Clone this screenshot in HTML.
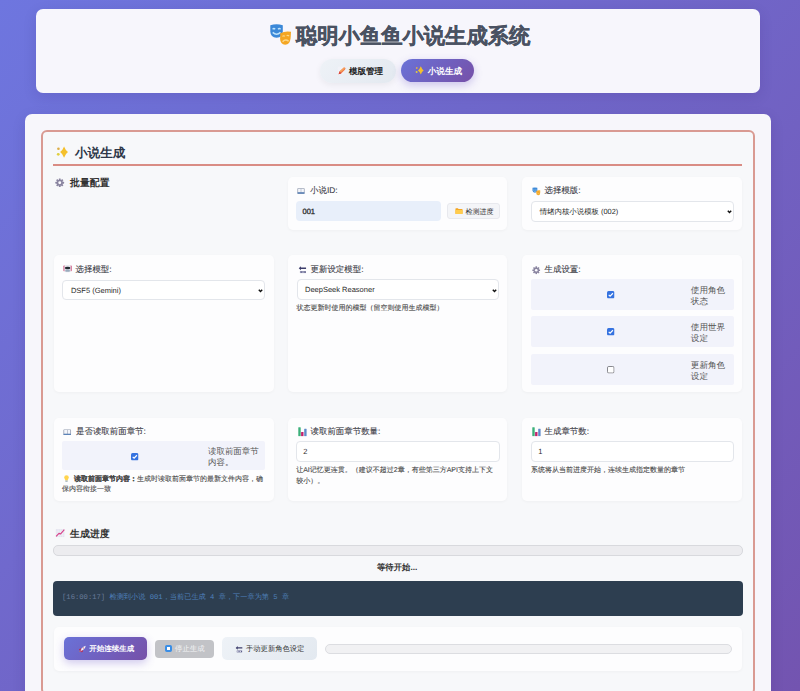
<!DOCTYPE html>
<html><head><meta charset="utf-8">
<style>
*{box-sizing:border-box;margin:0;padding:0}
html,body{width:800px;height:691px;overflow:hidden}
body{font-family:"Liberation Sans",sans-serif;text-rendering:geometricPrecision;background:linear-gradient(135deg,#6e76df 0%,#7354b0 100%);position:relative;color:#333}
.a{position:absolute;white-space:nowrap}
svg.a{overflow:visible}
.header{left:36px;top:9px;width:724px;height:84px;border-radius:7px;background:#f7f6fc;box-shadow:0 4px 14px rgba(40,20,90,.12)}
.title{left:296px;top:21px;font-size:21.3px;font-weight:bold;color:#4a5262;-webkit-text-stroke:0.35px #4a5262;line-height:30px}
.nav{height:24px;border-radius:12px}
.navt{font-size:8.5px;font-weight:bold;line-height:12px}
.main{left:25.2px;top:114px;width:745.4px;height:700px;border-radius:7px;background:#f7f6fb;box-shadow:0 4px 14px rgba(40,20,90,.12)}
.panel{left:41px;top:130px;width:714px;height:565px;border:2px solid #d99a92;border-radius:6px;background:#f7f8fa}
.h2{left:75px;top:143.5px;font-size:12.6px;font-weight:bold;color:#2d3748;line-height:18px}
.h3{font-size:9.9px;font-weight:bold;color:#333;line-height:14px}
.card{background:#fdfdfe;border-radius:5px;box-shadow:0 1px 3px rgba(0,0,0,.035)}
.lbl{font-size:8.45px;margin-top:-0.6px;color:#3d4048;-webkit-text-stroke:0.1px #3d4048;line-height:12px}
.inp{border-radius:4px;color:#2a2a2a;line-height:20px}
.sel{background:#fff;border:1px solid #e3e6eb}
.hint{font-size:7px;color:#484848;-webkit-text-stroke:0.1px #484848;line-height:10.5px;white-space:normal}
.chk{background:#f2f3fb;border-radius:2px}
.ctext{font-size:8.6px;margin-top:0.7px;line-height:11.3px;color:#555;width:38px;white-space:normal}
</style></head><body>

<svg width="0" height="0" style="position:absolute">
 <defs>
  <symbol id="gear" viewBox="0 0 36 36">
   <g fill="#8a85a0">
    <circle cx="18" cy="18" r="11.5"/>
    <rect x="14.5" y="1.5" width="7" height="33" rx="1.5"/>
    <rect x="14.5" y="1.5" width="7" height="33" rx="1.5" transform="rotate(45 18 18)"/>
    <rect x="14.5" y="1.5" width="7" height="33" rx="1.5" transform="rotate(90 18 18)"/>
    <rect x="14.5" y="1.5" width="7" height="33" rx="1.5" transform="rotate(135 18 18)"/>
   </g>
   <circle cx="18" cy="18" r="5.5" fill="#fbfafe"/>
  </symbol>
  <symbol id="masks" viewBox="0 0 22 22">
   <path d="M1.3 2.2 Q7.6 0.2 13.8 2.2 L13.8 8.6 Q13.6 14.6 7.6 14.8 Q1.5 14.6 1.3 8.6 Z" fill="#3b88d8"/>
   <path d="M3.6 6.2 Q4.9 4.9 6.2 6.2 M9 6.2 Q10.3 4.9 11.6 6.2" stroke="#bfe3fb" stroke-width="1.3" fill="none"/>
   <path d="M3.7 9.4 Q7.6 13.2 11.5 9.4" stroke="#bfe3fb" stroke-width="1.5" fill="none"/>
   <path d="M11.3 10.2 Q16.5 7.6 22 8.8 L21.6 15 Q21 21.8 16.2 21.8 Q11.2 21.4 11.1 15.8 Z" fill="#f4a623"/>
   <path d="M13.4 13.4 Q14.6 12.4 15.9 13.2 M17.6 12.8 Q18.9 12 20.1 12.9" stroke="#fcd88a" stroke-width="1.2" fill="none"/>
   <path d="M13.6 18.8 Q16.5 15.6 19.6 18.3" stroke="#fcd88a" stroke-width="1.5" fill="none"/>
  </symbol>
  <symbol id="book" viewBox="0 0 36 36">
   <rect x="2" y="6" width="32" height="24" rx="2" fill="#8a93a8"/>
   <rect x="5" y="8" width="12" height="17" fill="#f4f6fb"/>
   <rect x="19" y="8" width="12" height="17" fill="#f4f6fb"/>
   <rect x="2" y="24" width="32" height="6" rx="2" fill="#5b83b8"/>
  </symbol>
  <symbol id="folder" viewBox="0 0 36 36">
   <path d="M2 8 Q2 6 4 6 L13 6 L16 9 L32 9 Q34 9 34 11 L34 29 Q34 31 32 31 L4 31 Q2 31 2 29 Z" fill="#f4a623"/>
   <path d="M2 14 L34 14 L34 29 Q34 31 32 31 L4 31 Q2 31 2 29 Z" fill="#ffcc4d"/>
  </symbol>
  <symbol id="robot" viewBox="0 0 36 36">
   <rect x="1" y="6" width="8" height="22" rx="3" fill="#d77b9c"/>
   <rect x="27" y="6" width="8" height="22" rx="3" fill="#d77b9c"/>
   <rect x="6" y="4" width="24" height="28" rx="6" fill="#e6e8ee"/>
   <ellipse cx="18" cy="16" rx="11" ry="5" fill="#232a30"/>
   <rect x="9" y="22" width="18" height="8" rx="3" fill="#9aabbd"/>
  </symbol>
  <symbol id="back" viewBox="0 0 36 36">
   <path d="M3 13 L12 5 L12 10 L33 10 L33 16 L12 16 L12 21 Z" fill="#3c3d6b"/>
   <rect x="8" y="25" width="24" height="8" fill="#5a5c88"/>
   <rect x="10" y="26.5" width="3" height="5" fill="#eeeefa"/>
   <rect x="16" y="26.5" width="3" height="5" fill="#eeeefa"/>
   <rect x="22" y="26.5" width="4" height="5" fill="#eeeefa"/>
  </symbol>
  <symbol id="bars" viewBox="0 0 9 9.5">
   <rect x="0.3" y="0.3" width="2.4" height="9" rx="0.4" fill="#3bb07a"/>
   <rect x="3.1" y="5" width="2.4" height="4.3" rx="0.4" fill="#c3206c"/>
   <rect x="6.2" y="1.7" width="2.4" height="7.6" rx="0.4" fill="#5d8ac8"/>
  </symbol>
  <symbol id="chart" viewBox="0 0 36 36">
   <rect x="3" y="4" width="30" height="28" fill="#e4e4ee"/>
   <path d="M3 11 H33 M3 18 H33 M3 25 H33 M11 4 V32 M19 4 V32 M27 4 V32" stroke="#f7f7fc" stroke-width="1.6"/>
   <path d="M4 30 L14 19 L20 21 L33 6" stroke="#d8418a" stroke-width="4" fill="none" stroke-linejoin="round"/>
  </symbol>
  <symbol id="bulb" viewBox="7 2 22 31" preserveAspectRatio="none">
   <circle cx="18" cy="13" r="10" fill="#ffd44d"/>
   <rect x="12" y="18" width="12" height="8" fill="#ffd44d"/>
   <rect x="12.5" y="26" width="11" height="6" rx="2" fill="#99aab5"/>
  </symbol>
  <symbol id="rocket" viewBox="0 0 36 36">
   <path d="M8 22 L4 20 Q9 13 15 15 Z" fill="#c81e3a"/>
   <path d="M14 28 L16 32 Q23 27 21 21 Z" fill="#c81e3a"/>
   <path d="M9 27 Q6 30 5 31 Q6 27 9 24 Z" fill="#f4900c"/>
   <path d="M9 27 L21 21 Q33 11 33 3 Q25 3 15 15 Z" fill="#eef0f6"/>
   <path d="M9 27 L15 15 Q12 19 8 22 Q6 25 9 27 Q11 30 14 28 Q17 24 21 21 Z" fill="#dd2e44"/>
   <circle cx="23" cy="13" r="3" fill="#e37a8c"/>
  </symbol>
  <symbol id="memo" viewBox="0 0 36 36">
   <rect x="3" y="3" width="22" height="28" rx="1" fill="#f1f2f8"/>
   <path d="M6 31 L10 20 L26 6 Q30 5 32 8 Q33 11 30 14 L16 28 Z" fill="#ee7a4a"/>
   <path d="M10 20 L26 6 Q29 6 30 9 L14 24 Z" fill="#f7a35c"/>
   <path d="M6 31 L10 20 L16 28 Z" fill="#d8413a"/>
  </symbol>
  <symbol id="spark" viewBox="0 0 36 36">
   <path d="M23.2 1.4 Q27.6 12.8 34.5 17.5 Q27.6 22.2 23.2 33.7 Q18.8 22.2 11.9 17.5 Q18.8 12.8 23.2 1.4 Z" fill="#f4c02c"/>
   <circle cx="7" cy="8" r="3.8" fill="#dcae48"/>
   <circle cx="6.5" cy="24" r="4" fill="#e0cf3e"/>
  </symbol>
  <symbol id="cbon" viewBox="0 0 8 8">
   <rect x="0" y="0" width="8" height="8" rx="1.6" fill="#3572e0"/>
   <path d="M1.8 4.1 L3.3 5.6 L6.3 2.4" stroke="#fff" stroke-width="1.2" fill="none"/>
  </symbol>
  <symbol id="cboff" viewBox="0 0 8 8">
   <rect x="0.5" y="0.5" width="7" height="7" rx="1.4" fill="#fff" stroke="#6f6f75" stroke-width="0.9"/>
  </symbol>
 </defs>
</svg>

<!-- header -->
<div class="a header"></div>
<svg class="a" style="left:269px;top:23px" width="22" height="22"><use href="#masks"/></svg>
<div class="a title">聪明小鱼鱼小说生成系统</div>
<div class="a nav" style="left:320px;top:59px;width:76px;background:linear-gradient(135deg,#eef2f7,#e3e9f0);box-shadow:0 2px 6px rgba(0,0,0,.06)"></div>
<svg class="a" style="left:336.5px;top:66px" width="9.5" height="9.5"><use href="#memo"/></svg>
<div class="a navt" style="left:349px;top:65px;color:#222">模版管理</div>
<div class="a nav" style="left:400.8px;top:58.9px;height:23.2px;width:73.6px;background:linear-gradient(135deg,#6a72d8,#7650a8);box-shadow:0 3px 8px rgba(102,80,200,.3)"></div>
<svg class="a" style="left:415px;top:66.2px" width="9" height="9"><use href="#spark"/></svg>
<div class="a navt" style="left:427.7px;top:65px;color:#fff;font-size:8.6px">小说生成</div>

<!-- main -->
<div class="a main"></div>
<div class="a panel"></div>
<svg class="a" style="left:55.5px;top:145.5px" width="12.5" height="12.5"><use href="#spark"/></svg>
<div class="a h2">小说生成</div>
<div class="a" style="left:53px;top:164px;width:689px;height:2px;background:#d98c84"></div>

<!-- row1 -->
<svg class="a" style="left:55.3px;top:178.2px" width="9.5" height="9.5"><use href="#gear"/></svg>
<div class="a h3" style="left:70px;top:177px">批量配置</div>

<div class="a card" style="left:287.7px;top:176.6px;width:219.8px;height:53.8px"></div>
<svg class="a" style="left:297.2px;top:186.5px" width="8" height="8"><use href="#book"/></svg>
<div class="a lbl" style="left:310px;top:185px">小说ID:</div>
<div class="a inp" style="left:296px;top:200.6px;width:144.8px;height:20.4px;background:#e8effa;padding-left:6.5px;font-size:7.5px;line-height:21px;-webkit-text-stroke:0.3px #2e2e2e">001</div>
<div class="a" style="left:447.2px;top:202.5px;width:52.8px;height:16.5px;background:#f4f5f8;border:1px solid #e8e9ee;border-radius:3px"></div>
<svg class="a" style="left:454.5px;top:206.5px" width="8" height="8"><use href="#folder"/></svg>
<div class="a" style="left:465.5px;top:206.5px;font-size:7px;line-height:12px;color:#333">检测进度</div>

<div class="a card" style="left:522px;top:176.6px;width:220px;height:53.8px"></div>
<svg class="a" style="left:532.3px;top:186.8px" width="8.5" height="8.5"><use href="#masks"/></svg>
<div class="a lbl" style="left:544.5px;top:185px">选择模版:</div>
<div class="a inp sel" style="left:531.3px;top:200.6px;width:202.5px;height:21.4px;padding-left:7.5px;font-size:7.4px">情绪内核小说模板 (002)</div>
<svg class="a" style="left:726.6px;top:209.7px" width="5" height="3.5" viewBox="0 0 10 7"><path d="M1.6 1.6 L5 5 L8.4 1.6" stroke="#111" stroke-width="3" fill="none"/></svg>

<!-- row2 -->
<div class="a card" style="left:53.5px;top:255.4px;width:220px;height:136.3px"></div>
<svg class="a" style="left:62.8px;top:264.3px" width="9.2" height="9.2"><use href="#robot"/></svg>
<div class="a lbl" style="left:75.5px;top:263.5px">选择模型:</div>
<div class="a inp sel" style="left:62.4px;top:279.6px;width:202.8px;height:20.8px;padding-left:7.5px;font-size:7.5px">DSF5 (Gemini)</div>
<svg class="a" style="left:257.8px;top:288.7px" width="5" height="3.5" viewBox="0 0 10 7"><path d="M1.6 1.6 L5 5 L8.4 1.6" stroke="#111" stroke-width="3" fill="none"/></svg>

<div class="a card" style="left:287.7px;top:255.4px;width:219.8px;height:136.3px"></div>
<svg class="a" style="left:297.6px;top:265px" width="8.8" height="8.8"><use href="#back"/></svg>
<div class="a lbl" style="left:310.5px;top:263.5px">更新设定模型:</div>
<div class="a inp sel" style="left:296.5px;top:279px;width:202.5px;height:21.4px;padding-left:7.5px;font-size:7.5px">DeepSeek Reasoner</div>
<svg class="a" style="left:492px;top:288.5px" width="5" height="3.5" viewBox="0 0 10 7"><path d="M1.6 1.6 L5 5 L8.4 1.6" stroke="#111" stroke-width="3" fill="none"/></svg>
<div class="a hint" style="left:296.4px;top:303.5px;white-space:nowrap">状态更新时使用的模型（留空则使用生成模型）</div>

<div class="a card" style="left:522px;top:255.4px;width:220px;height:136.3px"></div>
<svg class="a" style="left:532px;top:265.5px" width="8.5" height="8.5"><use href="#gear"/></svg>
<div class="a lbl" style="left:544.5px;top:263.5px">生成设置:</div>
<div class="a chk" style="left:530.5px;top:278.5px;width:203.5px;height:31px"></div>
<svg class="a" style="left:607px;top:290.5px" width="7.5" height="7.5"><use href="#cbon"/></svg>
<div class="a ctext" style="left:690.8px;top:284px">使用角色状态</div>
<div class="a chk" style="left:530.5px;top:316px;width:203.5px;height:31px"></div>
<svg class="a" style="left:607px;top:328px" width="7.5" height="7.5"><use href="#cbon"/></svg>
<div class="a ctext" style="left:690.8px;top:321.5px">使用世界设定</div>
<div class="a chk" style="left:530.5px;top:353.5px;width:203.5px;height:31px"></div>
<svg class="a" style="left:607px;top:365.5px" width="7.5" height="7.5"><use href="#cboff"/></svg>
<div class="a ctext" style="left:690.8px;top:359px">更新角色设定</div>

<!-- row3 -->
<div class="a card" style="left:53.5px;top:418px;width:220px;height:82.5px"></div>
<svg class="a" style="left:63.2px;top:427.8px" width="8.5" height="8.5"><use href="#book"/></svg>
<div class="a lbl" style="left:76px;top:425.5px">是否读取前面章节:</div>
<div class="a chk" style="left:62px;top:441.2px;width:203px;height:28.5px"></div>
<svg class="a" style="left:131px;top:452.8px" width="7.5" height="7.5"><use href="#cbon"/></svg>
<div class="a ctext" style="left:208px;top:445.5px;width:56px;font-size:8.45px">读取前面章节内容。</div>
<svg class="a" style="left:64px;top:474.5px" width="5" height="7"><use href="#bulb"/></svg>
<div class="a hint" style="left:62px;top:474.5px;width:206px;text-indent:12px"><b>读取前面章节内容：</b>生成时读取前面章节的最新文件内容，确保内容衔接一致</div>

<div class="a card" style="left:287.7px;top:418px;width:219.8px;height:82.5px"></div>
<svg class="a" style="left:297.5px;top:426.5px" width="9" height="9.5"><use href="#bars"/></svg>
<div class="a lbl" style="left:310.5px;top:425.5px">读取前面章节数量:</div>
<div class="a inp sel" style="left:296.2px;top:441.2px;width:203.4px;height:20.6px;padding-left:6px;font-size:7.5px">2</div>
<div class="a hint" style="left:296.2px;top:466px;width:203px">让AI记忆更连贯。（建议不超过2章，有些第三方API支持上下文较小）。</div>

<div class="a card" style="left:522px;top:418px;width:220px;height:82.5px"></div>
<svg class="a" style="left:531.8px;top:426.5px" width="9" height="9.5"><use href="#bars"/></svg>
<div class="a lbl" style="left:544.5px;top:425.5px">生成章节数:</div>
<div class="a inp sel" style="left:531.2px;top:441.2px;width:203px;height:20.6px;padding-left:6px;font-size:7.5px">1</div>
<div class="a hint" style="left:531px;top:466px;white-space:nowrap">系统将从当前进度开始，连续生成指定数量的章节</div>

<!-- progress -->
<svg class="a" style="left:54.8px;top:528.3px" width="10.2" height="10.2"><use href="#chart"/></svg>
<div class="a h3" style="left:70px;top:527.5px">生成进度</div>
<div class="a" style="left:53px;top:545.1px;width:689.5px;height:10.8px;border-radius:5px;background:#ececef;border:1px solid #d8d9dd"></div>
<div class="a" style="left:377px;top:561px;font-size:8.35px;font-weight:bold;color:#333;line-height:12px">等待开始...</div>
<div class="a" style="left:53px;top:580.5px;width:689.5px;height:35px;border-radius:4px;background:#2d3e50"></div>
<div class="a" style="left:62px;top:592.5px;font-family:'Liberation Mono',monospace;font-size:7.2px;line-height:10px;color:#4f80ba"><span style="color:#687a98">[16:00:17]</span> 检测到小说 001，当前已生成 4 章，下一章为第 5 章</div>

<div class="a card" style="left:54px;top:626.6px;width:688px;height:44px"></div>
<div class="a" style="left:64.4px;top:637px;width:82.6px;height:23px;border-radius:5px;background:linear-gradient(135deg,#6a72d8,#7650a8);box-shadow:0 3px 8px rgba(102,80,200,.3)"></div>
<svg class="a" style="left:77.5px;top:644.5px" width="8.5" height="8.5"><use href="#rocket"/></svg>
<div class="a" style="left:89.3px;top:643px;color:#fff;font-size:7.5px;font-weight:bold;line-height:12px">开始连续生成</div>
<div class="a" style="left:155px;top:639.5px;width:59px;height:18px;border-radius:4px;background:#c2c3c7"></div>
<div class="a" style="left:164.8px;top:645.4px;width:7px;height:7px;border-radius:1.8px;border:2px solid #3a8ee6;background:#fff"></div>
<div class="a" style="left:175px;top:642.5px;color:#f2f3f5;font-size:7.4px;line-height:12px">停止生成</div>
<div class="a" style="left:222px;top:637px;width:95px;height:22.5px;border-radius:5px;background:linear-gradient(135deg,#eef2f7,#e3e9f0)"></div>
<svg class="a" style="left:234.5px;top:644.5px" width="8" height="8"><use href="#back"/></svg>
<div class="a" style="left:246px;top:642.5px;color:#333;font-size:7.3px;line-height:12px">手动更新角色设定</div>
<div class="a" style="left:325px;top:644.2px;width:406.5px;height:9.5px;border-radius:5px;background:#f1f1f3;border:1px solid #dcdde1"></div>

</body></html>
